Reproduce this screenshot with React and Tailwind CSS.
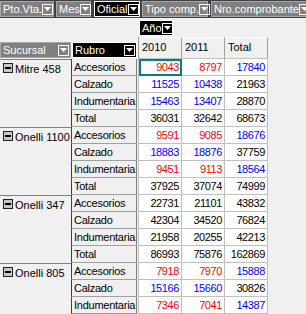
import React from 'react';

const R = 'text-[#ff0000]';
const B = 'text-[#0000ff]';
const K = 'text-black';

const GROUPS = [
  {
    name: 'Mitre 458',
    rows: [
      ['Accesorios', [[9043, R], [8797, R], [17840, B]]],
      ['Calzado', [[11525, B], [10438, B], [21963, K]]],
      ['Indumentaria', [[15463, B], [13407, B], [28870, K]]],
      ['Total', [[36031, K], [32642, K], [68673, K]]],
    ],
  },
  {
    name: 'Onelli 1100',
    rows: [
      ['Accesorios', [[9591, R], [9085, R], [18676, B]]],
      ['Calzado', [[18883, B], [18876, B], [37759, K]]],
      ['Indumentaria', [[9451, R], [9113, R], [18564, B]]],
      ['Total', [[37925, K], [37074, K], [74999, K]]],
    ],
  },
  {
    name: 'Onelli 347',
    rows: [
      ['Accesorios', [[22731, K], [21101, K], [43832, K]]],
      ['Calzado', [[42304, K], [34520, K], [76824, K]]],
      ['Indumentaria', [[21958, K], [20255, K], [42213, K]]],
      ['Total', [[86993, K], [75876, K], [162869, K]]],
    ],
  },
  {
    name: 'Onelli 805',
    rows: [
      ['Accesorios', [[7918, R], [7970, R], [15888, B]]],
      ['Calzado', [[15166, B], [15660, B], [30826, K]]],
      ['Indumentaria', [[7346, R], [7041, R], [14387, B]]],
    ],
  },
];

function Arrow() {
  return (
    <span className="flex h-[11px] w-[11px] shrink-0 items-center justify-center border border-white">
      <svg width="7" height="4" viewBox="0 0 7 4">
        <polygon points="0,0 7,0 3.5,4" fill="#fff" />
      </svg>
    </span>
  );
}

function FieldButton({ label, dark, className = '' }) {
  const tone = dark ? 'bg-black border-white' : 'bg-[#808080] border-[#a8a8a8]';
  return (
    <div className={`flex h-[16px] shrink-0 items-center justify-between border pl-[2px] pr-[1px] text-white ${tone} ${className}`}>
      <span className="whitespace-nowrap">{label}</span>
      <Arrow />
    </div>
  );
}

function MinusBox() {
  return (
    <svg width="10" height="10" viewBox="0 0 10 10" className="shrink-0">
      <rect x="0.5" y="0.5" width="9" height="9" fill="#c8c8c8" stroke="#202020" />
      <rect x="2" y="4" width="6" height="2" fill="#000" />
    </svg>
  );
}

export default function App() {
  return (
    <div className="h-[314px] w-[306px] overflow-hidden bg-[#f0f0f0] font-['Liberation_Sans',Arial,sans-serif] text-[11px] leading-none text-black">
      {/* field bar */}
      <div className="flex h-[18px] items-center overflow-hidden bg-[#404040]">
        <FieldButton label="Pto.Vta." className="w-[54px]" />
        <FieldButton label="Mes" className="ml-[2px] w-[35px]" />
        <FieldButton label="Oficial" dark className="ml-[3px] w-[46px]" />
        <FieldButton label="Tipo comp." className="ml-[2px] w-[66px]" />
        <FieldButton label="Nro.comprobante" className="ml-[3px] w-[100px]" />
      </div>

      {/* column field */}
      <div className="flex h-[19px]">
        <div className="w-[139px] shrink-0" />
        <FieldButton label="Año" dark className="mt-[2px] w-[34px]" />
      </div>

      {/* header row */}
      <div className="flex h-[22px]">
        <div className="flex w-[138px] shrink-0 items-end pb-[1px]">
          <FieldButton label="Sucursal" className="h-[15px] w-[71px]" />
          <FieldButton label="Rubro" dark className="ml-[1px] h-[15px] w-[65px]" />
        </div>
        <div className="flex border-l border-[#a0a0a0]">
          {['2010', '2011', 'Total'].map((y) => (
            <div key={y} className="flex h-[22px] w-[43px] items-start border-t border-r border-b border-t-white border-r-[#a0a0a0] border-b-[#c0c0c0] pl-[3px] pt-[4px]">
              {y}
            </div>
          ))}
        </div>
      </div>

      {/* body */}
      {GROUPS.map((g) => (
        <div key={g.name} className="flex">
          <div className="flex w-[71px] shrink-0 items-start gap-[2px] border-t border-[#808080] pl-[3px] pt-[3px]">
            <MinusBox />
            <span className="mt-[1px] whitespace-nowrap">{g.name}</span>
          </div>
          <div className="flex flex-col">
            {g.rows.map(([rubro, vals], ri) => (
              <div key={rubro} className="flex h-[17px]">
                <div className="flex w-[66px] shrink-0 items-center overflow-hidden whitespace-nowrap border-l border-r border-b border-l-[#404040] border-r-[#808080] border-b-[#a0a0a0] pl-[2px] tracking-[-0.25px]">
                  {rubro}
                </div>
                <div className="w-[1px] shrink-0" />
                <div className="flex border-l border-[#c0c0c0]">
                  {vals.map(([v, c], ci) => {
                    const sel = g.name === 'Mitre 458' && ri === 0 && ci === 0;
                    return (
                      <div
                        key={ci}
                        className={`flex h-[17px] w-[43px] items-center justify-end border-r border-b border-[#c0c0c0] bg-white pr-[2px] tracking-[-0.4px] ${c} ${sel ? 'outline-2 -outline-offset-2 outline-[#008080]' : ''}`}
                      >
                        {v}
                      </div>
                    );
                  })}
                </div>
              </div>
            ))}
          </div>
        </div>
      ))}
    </div>
  );
}
